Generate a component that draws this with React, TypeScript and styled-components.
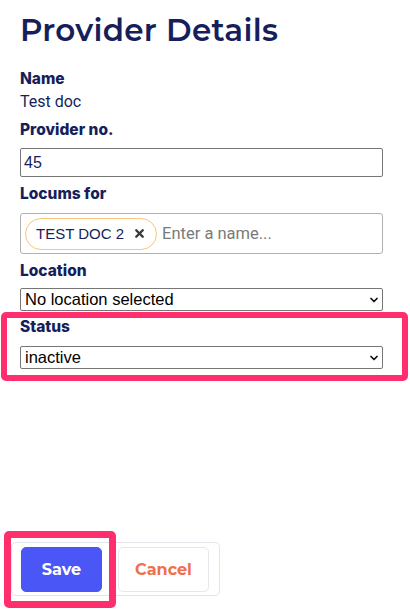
import { ChevronDown, X } from 'lucide-react';
import styled, { createGlobalStyle } from 'styled-components';

const GlobalStyle = createGlobalStyle`
  body {
    margin: 0;
    background: #ffffff;
    font-family: 'Inter', 'Liberation Sans', sans-serif;
  }
`;

const navy = '#161f5b';
const pink = '#ff2e6c';

const Page = styled.div`
  width: 410px;
  min-height: 609px;
  padding: 10px 27px 0 20px;
  box-sizing: border-box;
  display: flex;
  flex-direction: column;
`;

const Title = styled.h1`
  margin: 0 0 19px 0;
  font-family: 'Montserrat', 'Inter', sans-serif;
  font-size: 31px;
  font-weight: 650;
  line-height: 40px;
  color: ${navy};
  letter-spacing: 0.3px;
`;

const Field = styled.div<{ gap?: number }>`
  position: relative;
  display: flex;
  flex-direction: column;
  margin-bottom: ${({ gap }) => gap ?? 7}px;
`;

const Label = styled.div<{ space?: number }>`
  font-family: 'Inter', 'Roboto', sans-serif;
  font-size: 15.5px;
  font-weight: 800;
  line-height: 20px;
  color: ${navy};
  margin-bottom: ${({ space }) => space ?? 8}px;
`;

const Value = styled.div`
  font-family: 'Roboto', 'Inter', sans-serif;
  font-size: 16px;
  line-height: 20px;
  color: ${navy};
`;

const TextInput = styled.input`
  box-sizing: border-box;
  width: 100%;
  height: 29px;
  margin: 0;
  padding: 0 3px;
  border: 1px solid #767676;
  border-radius: 2px;
  font-family: 'Liberation Sans', Arial, sans-serif;
  font-size: 16px;
  color: ${navy};
  outline: none;
`;

const TagBox = styled.div`
  box-sizing: border-box;
  height: 41px;
  border: 1px solid #b0b0b0;
  border-radius: 3px;
  padding: 4px;
  display: flex;
  align-items: center;
  gap: 5px;
`;

const Chip = styled.div`
  box-sizing: border-box;
  height: 32px;
  padding: 0 10px;
  border: 1px solid #f6c67c;
  border-radius: 16px;
  display: flex;
  align-items: center;
  gap: 9px;
  font-family: 'Liberation Sans', Arial, sans-serif;
  font-size: 15px;
  color: ${navy};
`;

const TagInput = styled.input`
  flex: 1;
  min-width: 0;
  border: none;
  outline: none;
  padding: 0;
  font-family: 'Roboto', 'Inter', sans-serif;
  font-size: 16.5px;
  color: #333;
  &::placeholder {
    color: #7a7a7a;
  }
`;

const SelectBox = styled.div`
  position: relative;
  box-sizing: border-box;
  height: 23px;
  border: 1px solid #767676;
  border-radius: 2px;
  display: flex;
  align-items: center;
  padding: 0 4px;
  font-family: 'Liberation Sans', Arial, sans-serif;
  font-size: 16.5px;
  color: #000;
`;

const Chevron = styled.span`
  position: absolute;
  right: 2px;
  top: 5px;
  display: flex;
`;

const Highlight = styled.div<{ t: number; r: number; b: number; l: number; w: number }>`
  position: absolute;
  top: ${({ t }) => t}px;
  right: ${({ r }) => r}px;
  bottom: ${({ b }) => b}px;
  left: ${({ l }) => l}px;
  border: ${({ w }) => w}px solid ${pink};
  border-radius: 5px;
  pointer-events: none;
`;

const Actions = styled.div`
  align-self: flex-start;
  margin: 173px 0 0 -9px;
  padding: 4px 10px 3px 9px;
  border: 1px solid #e4e4ea;
  border-radius: 5px;
  display: flex;
  gap: 16px;
`;

const SaveWrap = styled.div`
  position: relative;
  display: flex;
`;

const Button = styled.button<{ primary?: boolean }>`
  height: 45px;
  width: ${({ primary }) => (primary ? 81 : 91)}px;
  border-radius: 5px;
  border: 1px solid ${({ primary }) => (primary ? '#4b56f6' : '#e6e6ec')};
  background: ${({ primary }) => (primary ? '#4b56f6' : '#ffffff')};
  color: ${({ primary }) => (primary ? '#ffffff' : '#f06f4e')};
  font-family: 'Montserrat', 'Inter', sans-serif;
  font-size: 16px;
  font-weight: 700;
  cursor: pointer;
`;

const Select = ({ value }: { value: string }) => (
  <SelectBox>
    {value}
    <Chevron>
      <ChevronDown size={12} strokeWidth={3.5} color="#111" />
    </Chevron>
  </SelectBox>
);

export default function App() {
  return (
    <>
      <GlobalStyle />
      <Page>
        <Title>Provider Details</Title>

        <Field gap={8}>
          <Label space={3}>Name</Label>
          <Value>Test doc</Value>
        </Field>

        <Field>
          <Label>Provider no.</Label>
          <TextInput defaultValue="45" />
        </Field>

        <Field>
          <Label space={9}>Locums for</Label>
          <TagBox>
            <Chip>
              TEST DOC 2
              <X size={13} strokeWidth={4.5} color="#3a3a3a" />
            </Chip>
            <TagInput placeholder="Enter a name..." />
          </TagBox>
        </Field>

        <Field gap={6}>
          <Label space={7}>Location</Label>
          <Select value="No location selected" />
        </Field>

        <Field gap={0}>
          <Label space={9}>Status</Label>
          <Select value="inactive" />
          <Highlight t={-5} r={-25} b={-12} l={-19} w={6} />
        </Field>

        <Actions>
          <SaveWrap>
            <Button primary>Save</Button>
            <Highlight t={-16} r={-14} b={-16} l={-17} w={7} />
          </SaveWrap>
          <Button>Cancel</Button>
        </Actions>
      </Page>
    </>
  );
}
